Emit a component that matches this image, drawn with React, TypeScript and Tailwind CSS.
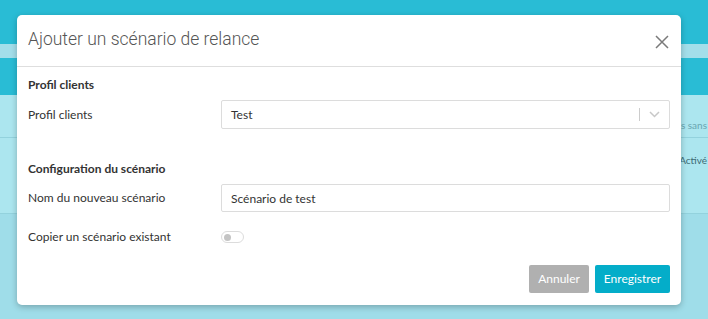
import React, { useState } from 'react';

const body = { fontFamily: 'Lato, "Open Sans", sans-serif' };

const Modal: React.FC = () => {
  const [copy, setCopy] = useState(false);

  return (
    <div
      className="absolute left-[17px] top-[15px] w-[664px] h-[290px] bg-white rounded-[5px] shadow-[0_2px_6px_rgba(0,0,0,0.25)] flex flex-col"
      style={body}
    >
      <div className="h-[52px] flex items-center justify-between pl-[11px] pr-[12px] border-b border-[#dedede]">
        <h2 className="text-[17.5px] font-light text-[#555] leading-none pb-[1px]" style={{ fontFamily: 'Roboto, sans-serif' }}>
          Ajouter un scénario de relance
        </h2>
        <button aria-label="Fermer" className="mt-[3px]">
          <svg width="14" height="14" viewBox="0 0 14 14" stroke="#7a7a7a" strokeWidth="1.5">
            <path d="M1 1L13 13M13 1L1 13" />
          </svg>
        </button>
      </div>

      <div className="flex-1 px-[11px] pt-[12px] text-[12px] text-[#333]">
        <div className="font-bold leading-none h-[16px]">Profil clients</div>
        <div className="flex items-center mt-[5px]">
          <label className="w-[193px]">Profil clients</label>
          <div className="flex-1 h-[29px] border border-[#dcdcdc] rounded-[2px] flex items-center pl-[9px]">
            <span className="flex-1">Test</span>
            <span className="w-px h-[13px] bg-[#ccc]" />
            <svg className="mx-[9px]" width="11" height="7" viewBox="0 0 11 7" fill="none" stroke="#c8c8c8" strokeWidth="1.5">
              <path d="M1 1L5.5 5.5L10 1" />
            </svg>
          </div>
        </div>

        <div className="font-bold leading-none h-[16px] mt-[34px]">Configuration du scénario</div>
        <div className="flex items-center mt-[5px]">
          <label className="w-[193px]">Nom du nouveau scénario</label>
          <input
            defaultValue="Scénario de test"
            className="flex-1 h-[28px] border border-[#dcdcdc] rounded-[2px] px-[9px] text-[12px] text-[#333] outline-none"
            style={body}
          />
        </div>

        <div className="flex items-center mt-[16px]">
          <label className="w-[193px]">Copier un scénario existant</label>
          <button
            onClick={() => setCopy(!copy)}
            className="w-[23px] h-[12px] rounded-full border border-[#dcdcdc] flex items-center px-[2px]"
          >
            <span className="w-[7px] h-[7px] rounded-full bg-[#c4c4c4]" />
          </button>
        </div>
      </div>

      <div className="flex justify-end gap-[6px] px-[11px] pb-[12px] text-[12px] text-white">
        <button className="w-[60px] h-[28px] bg-[#b0b0b0] rounded-[2px]">Annuler</button>
        <button className="w-[75px] h-[28px] bg-[#04adc9] rounded-[2px]">Enregistrer</button>
      </div>
    </div>
  );
};

const App: React.FC = () => {
  return (
    <div className="relative w-[708px] h-[319px] overflow-hidden bg-[#9fdde9]" style={body}>
      <div className="h-[44px] bg-[#29bcd5]" />
      <div className="h-[14px] bg-[#a3deea]" />
      <div className="h-[37px] bg-[#29bcd5]" />
      <div className="h-[43px] bg-[#ace6ef] border-b border-[#93d2dd] flex items-center justify-end pt-[18px] pr-[1px]">
        <span className="text-[10px] text-[#6aa5b0] whitespace-nowrap">ts sans</span>
      </div>
      <div className="h-[76px] bg-[#ace6ef] border-b border-[#93d2dd] flex justify-end pt-[15px] pr-[1px]">
        <span className="text-[10px] text-[#3d6a73] whitespace-nowrap">Activé</span>
      </div>
      <Modal />
    </div>
  );
};

export default App;
